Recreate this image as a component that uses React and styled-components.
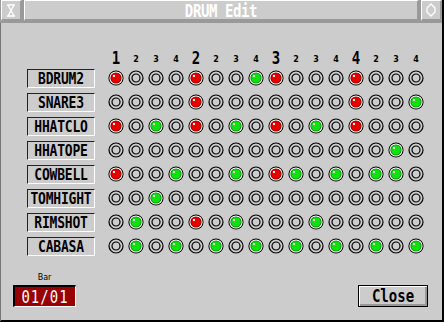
import React from 'react';
import styled, { createGlobalStyle } from 'styled-components';

const GlobalStyle = createGlobalStyle`
  html, body {
    margin: 0;
    padding: 0;
    background: #cccccc;
  }
`;

const tracks = [
  { name: 'BDRUM2', steps: 'R...R..GR...R...' },
  { name: 'SNARE3', steps: '....R.......R..G' },
  { name: 'HHATCLO', steps: 'R.G.R.G.R.G.R...' },
  { name: 'HHATOPE', steps: '..............G.' },
  { name: 'COWBELL', steps: 'R..G..G.RG.G.GG.' },
  { name: 'TOMHIGHT', steps: '..G.............' },
  { name: 'RIMSHOT', steps: '.G..R.G...G.....' },
  { name: 'CABASA', steps: '.G.G.G.G.G.G.G.G' },
];

const Led = ({ state }) => {
  if (state === '.') {
    return (
      <svg width="16" height="16" viewBox="0 0 16 16">
        <circle cx="8" cy="8" r="7" fill="none" stroke="#000" strokeWidth="1.2" />
        <circle cx="8" cy="8" r="4" fill="none" stroke="#000" strokeWidth="1.2" />
      </svg>
    );
  }
  const fill = state === 'R' ? '#e80000' : '#10e010';
  const edge = state === 'R' ? '#900000' : '#008800';
  return (
    <svg width="16" height="16" viewBox="0 0 16 16">
      <circle cx="8" cy="8" r="7.6" fill="#000" />
      <circle cx="8" cy="8" r="6.6" fill="#fff" />
      <circle cx="8" cy="8" r="5.6" fill={edge} />
      <circle cx="8" cy="8" r="4.8" fill={fill} />
      <rect x="5" y="5" width="2" height="2" fill="#fff" />
    </svg>
  );
};

const CloseIcon = () => (
  <svg width="10" height="13" viewBox="0 0 10 13">
    <path d="M1 1h8M1 12h8M2 1l6 11M8 1l-6 11" stroke="#fff" strokeWidth="1.3" fill="none" />
  </svg>
);

const ToggleIcon = () => (
  <svg width="10" height="14" viewBox="0 0 10 14">
    <path d="M5 1l4 4v4l-4 4l-4-4v-4z" stroke="#fff" strokeWidth="1.3" fill="none" />
  </svg>
);

const App = () => {
  const header = [];
  for (let i = 0; i < 16; i++) {
    const beat = i % 4 === 0;
    header.push(
      <HeadCell key={i} $beat={beat}>
        {beat ? <Tall $sy={1.25}>{i / 4 + 1}</Tall> : (i % 4) + 1}
      </HeadCell>
    );
  }

  return (
    <Window>
      <GlobalStyle />
      <TitleBar>
        <IconButton><CloseIcon /></IconButton>
        <Title><Tall $sy={1.3}>DRUM Edit</Tall></Title>
        <IconButton><ToggleIcon /></IconButton>
      </TitleBar>
      <Body>
        <Grid>
          <span />
          {header}
          {tracks.map((t) => (
            <React.Fragment key={t.name}>
              <LabelCell>
                <Label><Tall $sy={1.25}>{t.name}</Tall></Label>
              </LabelCell>
              {t.steps.split('').map((s, i) => (
                <Cell key={i}>
                  <Led state={s} />
                </Cell>
              ))}
            </React.Fragment>
          ))}
        </Grid>
        <Footer>
          <BarGroup>
            <BarLabel>Bar</BarLabel>
            <BarDisplay><Tall $sy={1.2}>01/01</Tall></BarDisplay>
          </BarGroup>
          <CloseButton><Tall $sy={1.25}>Close</Tall></CloseButton>
        </Footer>
      </Body>
    </Window>
  );
};

const Tall = styled.span`
  display: inline-block;
  transform: scaleY(${({ $sy }) => $sy});
`;

const Window = styled.div`
  width: 444px;
  height: 322px;
  box-sizing: border-box;
  display: flex;
  flex-direction: column;
  background: #cccccc;
  border-right: 2px solid #000;
  border-bottom: 2px solid #000;
  font-family: 'DejaVu Sans Mono', monospace;
`;

const TitleBar = styled.div`
  display: flex;
  gap: 2px;
  height: 21px;
  padding: 0 0 0 1px;
  border-bottom: 2px solid #999999;
  background: #999999;
`;

const bevel = `
  box-sizing: border-box;
  background: #cccccc;
  border-top: 1px solid #ffffff;
  border-left: 1px solid #ffffff;
  border-bottom: 2px solid #999999;
  border-right: 2px solid #999999;
`;

const IconButton = styled.div`
  ${bevel}
  width: 21px;
  height: 21px;
  display: flex;
  align-items: center;
  justify-content: center;
`;

const Title = styled.div`
  ${bevel}
  flex: 1;
  height: 21px;
  display: flex;
  align-items: center;
  justify-content: center;
  color: #ffffff;
  font-weight: bold;
  font-size: 14px;
  letter-spacing: -0.4px;
`;

const Body = styled.div`
  flex: 1;
  display: flex;
  flex-direction: column;
  border-left: 1px solid #777777;
  padding: 29px 0 0 26px;
`;

const Grid = styled.div`
  display: grid;
  grid-template-columns: 79px repeat(16, 20px);
  grid-template-rows: 14px repeat(8, 24px);
`;

const HeadCell = styled.div`
  display: flex;
  align-items: flex-end;
  justify-content: center;
  color: #000;
  font-weight: bold;
  font-size: ${({ $beat }) => ($beat ? '14px' : '8px')};
  line-height: ${({ $beat }) => ($beat ? '14px' : '10px')};
  padding-bottom: ${({ $beat }) => ($beat ? '1px' : '1px')};
  font-family: ${({ $beat }) => ($beat ? "'DejaVu Sans Mono'" : "'DejaVu Sans'")}, monospace;
`;

const LabelCell = styled.div`
  display: flex;
  align-items: center;
`;

const Label = styled.div`
  box-sizing: border-box;
  width: 68px;
  height: 19px;
  display: flex;
  align-items: center;
  justify-content: center;
  border-top: 1px solid #222222;
  border-left: 1px solid #222222;
  border-bottom: 1px solid #ffffff;
  border-right: 1px solid #ffffff;
  font-weight: bold;
  font-size: 13px;
  letter-spacing: -0.2px;
  color: #000;
`;

const Cell = styled.div`
  display: flex;
  align-items: center;
  justify-content: center;
`;

const Footer = styled.div`
  display: flex;
  align-items: flex-end;
  justify-content: space-between;
  padding: 0 14px 14px 0;
  margin-left: -14px;
  margin-top: 15px;
`;

const BarGroup = styled.div`
  display: flex;
  flex-direction: column;
  align-items: center;
  gap: 3px;
`;

const BarLabel = styled.div`
  font-family: 'DejaVu Sans', sans-serif;
  font-size: 8px;
  line-height: 9px;
  color: #000;
`;

const BarDisplay = styled.div`
  box-sizing: border-box;
  width: 63px;
  height: 22px;
  display: flex;
  align-items: center;
  justify-content: center;
  background: #990000;
  border-top: 2px solid #000;
  border-left: 2px solid #000;
  border-bottom: 1px solid #ffffff;
  border-right: 1px solid #ffffff;
  color: #ffffff;
  font-size: 14px;
  letter-spacing: 1px;
`;

const CloseButton = styled.div`
  box-sizing: border-box;
  width: 70px;
  height: 22px;
  display: flex;
  align-items: center;
  justify-content: center;
  background: #cccccc;
  border: 1px solid #000;
  box-shadow: inset 1px 1px 0 #ffffff, inset -2px -2px 0 #999999;
  color: #000;
  font-weight: bold;
  font-size: 14px;
`;

export default App;
